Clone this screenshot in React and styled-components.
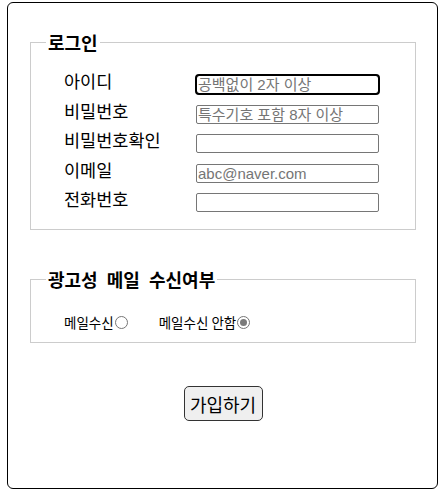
import React from "react";
import styled, { createGlobalStyle } from "styled-components";

const Global = createGlobalStyle`
  html, body { margin: 0; padding: 0; background: #fff; }
  body { font-family: "Noto Sans CJK KR", "Noto Sans", sans-serif; color: #000; }
`;

const Card = styled.form`
  box-sizing: border-box;
  width: 431px;
  height: 487px;
  margin: 2px 0 0 7px;
  border: 1px solid #000;
  border-radius: 6px;
  padding: 0 21px 0 22px;
  display: flex;
  flex-direction: column;
`;

const Group = styled.fieldset`
  margin: ${(p) => p.$top}px 0 0 0;
  padding: 0;
  border: 1px solid #ccc;
  min-inline-size: 0;
  height: ${(p) => p.$h}px;
  box-sizing: border-box;
`;

const Legend = styled.legend`
  margin-left: 15px;
  padding: 0 2px;
  font-size: 18px;
  font-weight: 700;
  line-height: 22px;
  word-spacing: 5px;
`;

const Grid = styled.div`
  display: grid;
  grid-template-columns: 132px 183px;
  grid-auto-rows: 29.5px;
  padding: 22px 0 0 33px;
`;

const Label = styled.label`
  font-size: 17.5px;
  line-height: 17px;
  margin-top: -3px;
`;

const Input = styled.input`
  box-sizing: border-box;
  width: 183px;
  height: 19px;
  margin: 0;
  padding: 0 1px;
  border: 1px solid #767676;
  border-radius: 2px;
  font-family: "Liberation Sans", "Noto Sans CJK KR", sans-serif;
  font-size: 15px;
  line-height: 17px;
  outline: ${(p) => (p.$focus ? "2px solid #000" : "none")};
  outline-offset: -1px;
  ${(p) => p.$focus && "border-radius: 3px;"}
  &::placeholder { color: #757575; }
`;

const RadioRow = styled.div`
  display: flex;
  align-items: center;
  padding: 22px 0 0 33px;
  font-size: 13.5px;
`;

const RadioLabel = styled.label`
  display: inline-flex;
  align-items: center;
  margin-right: ${(p) => p.$mr || 0}px;
`;

const Radio = styled.input`
  appearance: none;
  box-sizing: border-box;
  width: 13px;
  height: 13px;
  margin: 0 0 0 1px;
  border: 1px solid #767676;
  border-radius: 50%;
  background: #fff;
  position: relative;
  &:checked::after {
    content: "";
    position: absolute;
    left: 2px;
    top: 2px;
    width: 7px;
    height: 7px;
    border-radius: 50%;
    background: #7a7a7a;
  }
`;

const ButtonWrap = styled.div`
  display: flex;
  justify-content: center;
  margin-top: 43px;
`;

const Button = styled.button`
  box-sizing: border-box;
  width: 79px;
  height: 35px;
  border: 1px solid #333;
  border-radius: 5px;
  background: #efefef;
  font-family: "Noto Sans CJK KR", "Noto Sans", sans-serif;
  font-size: 18px;
  color: #000;
  padding: 0;
`;

const rows = [
  { label: "아이디", ph: "공백없이 2자 이상", focus: true },
  { label: "비밀번호", ph: "특수기호 포함 8자 이상" },
  { label: "비밀번호확인", ph: "" },
  { label: "이메일", ph: "abc@naver.com" },
  { label: "전화번호", ph: "" },
];

export default function App() {
  return (
    <>
      <Global />
      <Card onSubmit={(e) => e.preventDefault()}>
        <Group $top={28} $h={199}>
          <Legend>로그인</Legend>
          <Grid>
            {rows.map((r) => (
              <React.Fragment key={r.label}>
                <Label>{r.label}</Label>
                <Input placeholder={r.ph} $focus={r.focus} />
              </React.Fragment>
            ))}
          </Grid>
        </Group>
        <Group $top={38} $h={75}>
          <Legend>광고성 메일 수신여부</Legend>
          <RadioRow>
            <RadioLabel $mr={31}>
              메일수신
              <Radio type="radio" name="ad" />
            </RadioLabel>
            <RadioLabel>
              메일수신 안함
              <Radio type="radio" name="ad" defaultChecked />
            </RadioLabel>
          </RadioRow>
        </Group>
        <ButtonWrap>
          <Button type="submit">가입하기</Button>
        </ButtonWrap>
      </Card>
    </>
  );
}
